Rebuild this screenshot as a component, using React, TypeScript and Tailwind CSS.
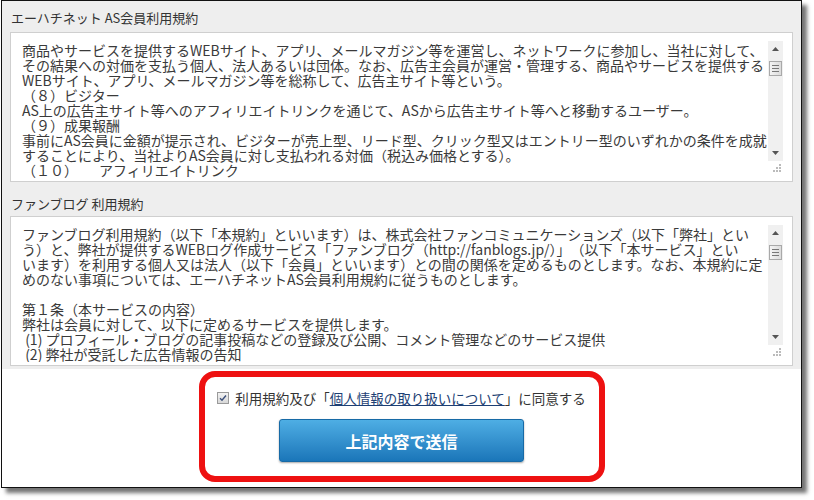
const JP = { fontFamily: '"Noto Sans CJK JP", "Liberation Sans", sans-serif' }

const termsAS = [
  '商品やサービスを提供するWEBサイト、アプリ、メールマガジン等を運営し、ネットワークに参加し、当社に対して、',
  'その結果への対価を支払う個人、法人あるいは団体。なお、広告主会員が運営・管理する、商品やサービスを提供する',
  'WEBサイト、アプリ、メールマガジン等を総称して、広告主サイト等という。',
  '（８）ビジター',
  'AS上の広告主サイト等へのアフィリエイトリンクを通じて、ASから広告主サイト等へと移動するユーザー。',
  '（９）成果報酬',
  '事前にAS会員に金額が提示され、ビジターが売上型、リード型、クリック型又はエントリー型のいずれかの条件を成就',
  'することにより、当社よりAS会員に対し支払われる対価（税込み価格とする）。',
  '（１０）　　アフィリエイトリンク',
]

const termsBlog = [
  'ファンブログ利用規約（以下「本規約」といいます）は、株式会社ファンコミュニケーションズ（以下「弊社」とい',
  'う）と、弊社が提供するWEBログ作成サービス「ファンブログ（http://fanblogs.jp/）」　（以下「本サービス」とい',
  'います）を利用する個人又は法人（以下「会員」といいます）との間の関係を定めるものとします。なお、本規約に定',
  'めのない事項については、エーハチネットAS会員利用規約に従うものとします。',
  '',
  '第１条（本サービスの内容）',
  '弊社は会員に対して、以下に定めるサービスを提供します。',
  ' (1) プロフィール・ブログの記事投稿などの登録及び公開、コメント管理などのサービス提供',
  ' (2) 弊社が受託した広告情報の告知',
]

function Scrollbar() {
  return (
    <>
      <div className="absolute right-[9px] top-[8px] w-[15px] h-[120px] bg-[#f0f0f0] flex flex-col items-center">
        <svg width="7" height="4" viewBox="0 0 7 4" className="mt-[6px]">
          <path d="M0 4 L3.5 0 L7 4 Z" fill="#555" />
        </svg>
        <div className="mt-[10px] w-[13px] h-[15px] border border-[#a9a9a9] bg-gradient-to-r from-[#f4f4f4] to-[#dcdcdc] flex flex-col items-center justify-center gap-[2px]">
          <div className="w-[7px] h-px bg-[#777]" />
          <div className="w-[7px] h-px bg-[#777]" />
          <div className="w-[7px] h-px bg-[#777]" />
        </div>
        <div className="flex-1" />
        <svg width="7" height="4" viewBox="0 0 7 4" className="mb-[6px]">
          <path d="M0 0 L3.5 4 L7 0 Z" fill="#555" />
        </svg>
      </div>
      <svg width="10" height="10" viewBox="0 0 10 10" className="absolute right-[10px] bottom-[8px]">
        <rect x="7" y="1" width="2" height="2" fill="#bbb" />
        <rect x="4" y="4" width="2" height="2" fill="#bbb" />
        <rect x="7" y="4" width="2" height="2" fill="#bbb" />
        <rect x="1" y="7" width="2" height="2" fill="#bbb" />
        <rect x="4" y="7" width="2" height="2" fill="#bbb" />
        <rect x="7" y="7" width="2" height="2" fill="#bbb" />
      </svg>
    </>
  )
}

function TermsBox({ lines }: { lines: string[] }) {
  return (
    <div className="relative h-[150px] border border-[#cfcfcf] bg-white overflow-hidden">
      <div className="pt-[10px] pl-[11px] mr-[25px] overflow-hidden text-[14px] leading-[15px] text-[#3a3a3a]">
        {lines.map((l, i) => (
          <div key={i} className="whitespace-pre h-[15px]">
            {l}
          </div>
        ))}
      </div>
      <Scrollbar />
    </div>
  )
}

export default function App() {
  return (
    <div className="w-[814px] h-[500px] bg-white overflow-hidden" style={JP}>
      <div className="ml-[1px] w-[801px] h-[488px] border border-[#111] bg-white shadow-[5px_5px_4px_rgba(0,0,0,0.55)] flex flex-col">
        {/* Terms sections */}
        <div className="h-[368px] bg-[#eeeeee] px-[8px]">
          <div className="pt-[7px] pl-[1px] h-[27px] leading-[20px] text-[13px] text-[#333]">
            エーハチネット AS会員利用規約
          </div>
          <div className="mt-[4px]">
            <TermsBox lines={termsAS} />
          </div>
          <div className="mt-[12px] pl-[1px] h-[20px] leading-[20px] text-[13px] text-[#333]">
            ファンブログ 利用規約
          </div>
          <div className="mt-[2px]">
            <TermsBox lines={termsBlog} />
          </div>
        </div>

        {/* Agreement + submit */}
        <div className="flex justify-center pt-[2px]">
          <div className="w-[406px] h-[111px] border-[6px] border-[#ee1111] rounded-[16px] bg-white flex flex-col items-center pt-[12px]">
            <label className="flex items-center gap-[6px] h-[18px] leading-[18px] text-[13.5px] text-[#333]">
              <span className="w-[12px] h-[12px] border border-[#9a9a9a] bg-gradient-to-b from-[#f2f2f2] to-[#d8d8d8] flex items-center justify-center">
                <svg width="8" height="8" viewBox="0 0 8 8">
                  <path d="M1 4.2 L3 6.2 L7 1.5" fill="none" stroke="#3b4f7a" strokeWidth="1.4" />
                </svg>
              </span>
              <span>
                利用規約及び「
                <span className="text-[#1d3f74] underline">個人情報の取り扱いについて</span>
                」に同意する
              </span>
            </label>
            <button className="mt-[12px] w-[245px] h-[43px] rounded-[3px] border border-[#176aa6] bg-gradient-to-b from-[#4eaee4] to-[#1a76b9] text-white text-[16px] font-semibold shadow-[0_1px_2px_rgba(0,0,0,0.35)]">
              上記内容で送信
            </button>
          </div>
        </div>
      </div>
    </div>
  )
}
